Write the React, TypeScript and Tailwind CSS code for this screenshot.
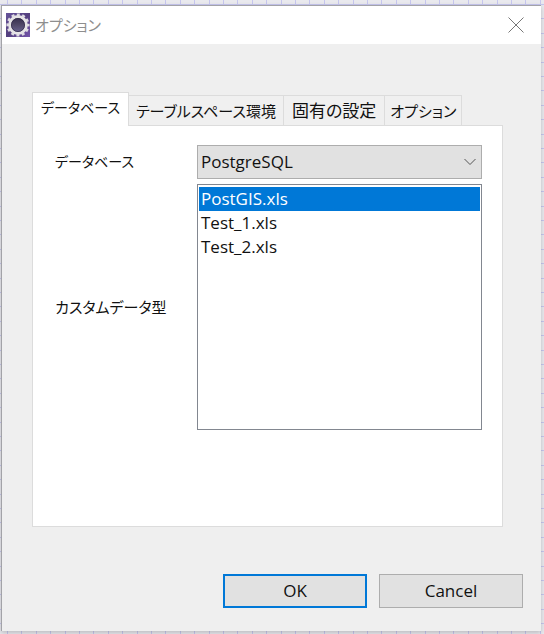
import { useState } from "react";

const tabs = [
  { name: "データベース", style: "px-2 text-sm leading-6" },
  { name: "テーブルスペース環境", style: "px-[7px] text-[15px] leading-6" },
  { name: "固有の設定", style: "px-2" },
  { name: "オプション", style: "px-[5px] text-[15px] leading-6" },
];
const files = ["PostGIS.xls", "Test_1.xls", "Test_2.xls"];

function AppIcon() {
  return (
    <svg viewBox="0 0 24 24" className="size-6 shrink-0" aria-hidden="true">
      <defs>
        <linearGradient id="tile" x1="0" y1="0" x2="1" y2="1">
          <stop offset="0" stopColor="#66539a" />
          <stop offset="0.5" stopColor="#54407f" />
          <stop offset="1" stopColor="#7556ab" />
        </linearGradient>
        <linearGradient id="core" x1="0" y1="0" x2="0" y2="1">
          <stop offset="0" stopColor="#322a49" />
          <stop offset="0.5" stopColor="#504868" />
          <stop offset="1" stopColor="#6d6796" />
        </linearGradient>
      </defs>
      <rect width="24" height="24" fill="url(#tile)" />
      <circle cx="12" cy="12" r="10.4" fill="none" stroke="#dddae2" strokeWidth="2.4" strokeDasharray="3 2.445" strokeDashoffset="1.5" />
      <circle cx="12" cy="12" r="8.4" fill="url(#core)" stroke="#e6e4e6" strokeWidth="3" />
      <circle cx="12" cy="12" r="6.6" fill="none" stroke="#2f2748" strokeWidth="0.7" />
    </svg>
  );
}

function TitleBar() {
  return (
    <header className="flex h-[38px] items-center bg-white pr-[17px] pl-1">
      <AppIcon />
      <h1 className="ml-[5px] flex-1 text-[15px] leading-6 text-[#8e8e8e]">オプション</h1>
      <button type="button" aria-label="Close" className="text-[#777]">
        <svg viewBox="0 0 16 16" className="size-4" fill="none" stroke="currentColor">
          <path d="M0.5 0.5 15.5 15.5M15.5 0.5 0.5 15.5" />
        </svg>
      </button>
    </header>
  );
}

export default function App() {
  const [active, setActive] = useState(0);
  return (
    <div className="min-h-screen bg-[#e9e9ee] bg-[image:repeating-linear-gradient(90deg,#c6c6ee_0_1px,transparent_1px_20%),repeating-linear-gradient(#c6c6ee_0_1px,transparent_1px_20%)] bg-[size:72px_72px] bg-[position:7px_4px] pt-[5px] pr-[3px] pb-[3px] pl-px font-['Open_Sans','Noto_Sans_CJK_JP',sans-serif] text-[17px] leading-6 text-[#111] [font-feature-settings:'palt']">
      <main className="border-t border-l border-[#a3a3a8] bg-[#efefef] shadow-[0_2px_5px_#0003]">
        <TitleBar />
        <div className="pt-12 pr-[38px] pl-[30px]">
          <div role="tablist" className="flex items-end">
            {tabs.map((tab, i) => (
              <button
                key={tab.name}
                type="button"
                role="tab"
                aria-selected={i === active}
                onClick={() => setActive(i)}
                className={`${tab.style} whitespace-nowrap border-[#dcdcdc] ${
                  i === active
                    ? "relative z-10 -mb-px h-[34px] border border-b-0 bg-white pb-1"
                    : "h-[30px] border-t border-r bg-[#f0f0f0]"
                }`}
              >
                {tab.name}
              </button>
            ))}
          </div>
          <section className="grid grid-cols-[142px_1fr] gap-y-[5px] border border-[#dcdcdc] bg-white pt-[19px] pr-5 pb-24 pl-[22px]">
            <label htmlFor="database" className="self-center text-sm leading-6">データベース</label>
            <div className="relative">
              <select id="database" className="block h-[34px] w-full appearance-none border border-[#adadad] bg-[#e1e1e1] pl-[3px]">
                <option>PostgreSQL</option>
              </select>
              <svg viewBox="0 0 12 8" className="pointer-events-none absolute top-[13px] right-[6px] h-2 w-3" fill="none" stroke="#555">
                <path d="M0.5 1 6 6.5 11.5 1" />
              </svg>
            </div>
            <label htmlFor="types" className="self-center text-[15px] leading-6">カスタムデータ型</label>
            <select id="types" size={10} defaultValue={files[0]} className="h-[246px] w-full appearance-none overflow-hidden border border-[#828790] bg-white px-px py-[2px]">
              {files.map((file) => (
                <option
                  key={file}
                  className="h-6 px-[2px] py-0 leading-6 checked:bg-linear-to-r checked:from-[#0078d7] checked:to-[#0078d7] checked:[-webkit-text-fill-color:white]"
                >
                  {file}
                </option>
              ))}
            </select>
          </section>
        </div>
        <footer className="flex justify-end gap-3 pt-[47px] pr-[18px] pb-[23px]">
          <button type="button" className="h-[34px] w-36 border-2 border-[#0078d7] bg-[#e1e1e1]">OK</button>
          <button type="button" className="h-[34px] w-36 border border-[#adadad] bg-[#e1e1e1]">Cancel</button>
        </footer>
      </main>
    </div>
  );
}
